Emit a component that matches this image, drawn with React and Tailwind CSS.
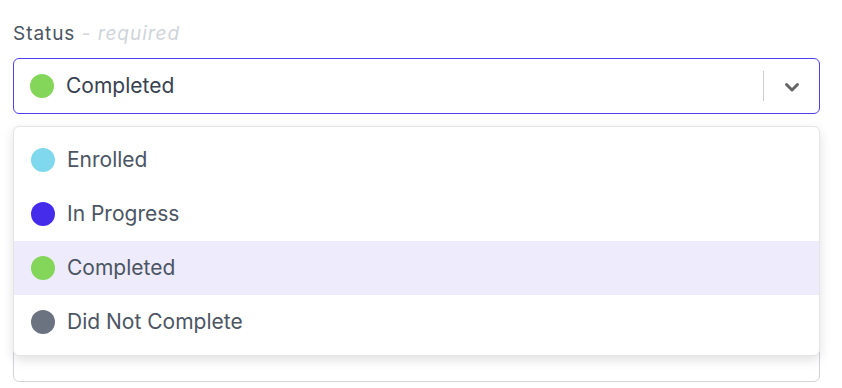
import { useState } from 'react';

const options = [
  { id: 'enrolled', label: 'Enrolled', color: 'bg-[#80d8ee]' },
  { id: 'in-progress', label: 'In Progress', color: 'bg-[#442cea]' },
  { id: 'completed', label: 'Completed', color: 'bg-[#84d65b]' },
  { id: 'dnc', label: 'Did Not Complete', color: 'bg-[#6b7280]' },
];

const ChevronDown = () => (
  <svg width="20" height="20" viewBox="0 0 20 20" fill="none">
    <path d="M4.5 7.5L10 13L15.5 7.5" stroke="#666666" strokeWidth="3" strokeLinecap="round" strokeLinejoin="round" />
  </svg>
);

const App = () => {
  const [selected] = useState('completed');
  const current = options.find((o) => o.id === selected);

  return (
    <div className="min-h-screen bg-white pl-[13px] pr-[22px] pt-[21px] font-['Inter',sans-serif]">
      {/* Label */}
      <label className="block text-[19px] leading-[26px] tracking-[0.05em] text-[#4b5563]">
        Status <span className="italic text-[#cfd4da]">- required</span>
      </label>

      {/* Select */}
      <div className="relative mt-[11px]">
        <div className="flex h-[56px] items-center rounded-[6px] border border-[#4f3ff0] pl-[16px]">
          <span className={`h-[24px] w-[24px] shrink-0 rounded-full ${current.color}`}></span>
          <span className="ml-[12px] flex-1 text-[21px] text-[#374151]">{current.label}</span>
          <div className="flex h-full items-center">
            <span className="h-[30px] w-px bg-[#cccccc]"></span>
            <span className="flex w-[55px] items-center justify-center pt-[2px]">
              <ChevronDown />
            </span>
          </div>
        </div>

        {/* Dropdown menu */}
        <div className="absolute left-0 right-0 top-full z-10 mt-[12px] rounded-[6px] border border-[#e5e5e5] bg-white py-[6px] shadow-[0_4px_12px_rgba(0,0,0,0.12)]">
          {options.map((opt) => (
            <div
              key={opt.id}
              className={`flex h-[54px] items-center pl-[17px] ${opt.id === selected ? 'bg-[#eeebfc]' : ''}`}
            >
              <span className={`h-[24px] w-[24px] shrink-0 rounded-full ${opt.color}`}></span>
              <span className="ml-[12px] text-[21px] text-[#4b5563]">{opt.label}</span>
            </div>
          ))}
        </div>
      </div>

      {/* Next field, mostly hidden under the menu */}
      <div className="mt-[212px] h-[56px] rounded-[6px] border border-[#d1d5db]"></div>
    </div>
  );
};

export default App;
